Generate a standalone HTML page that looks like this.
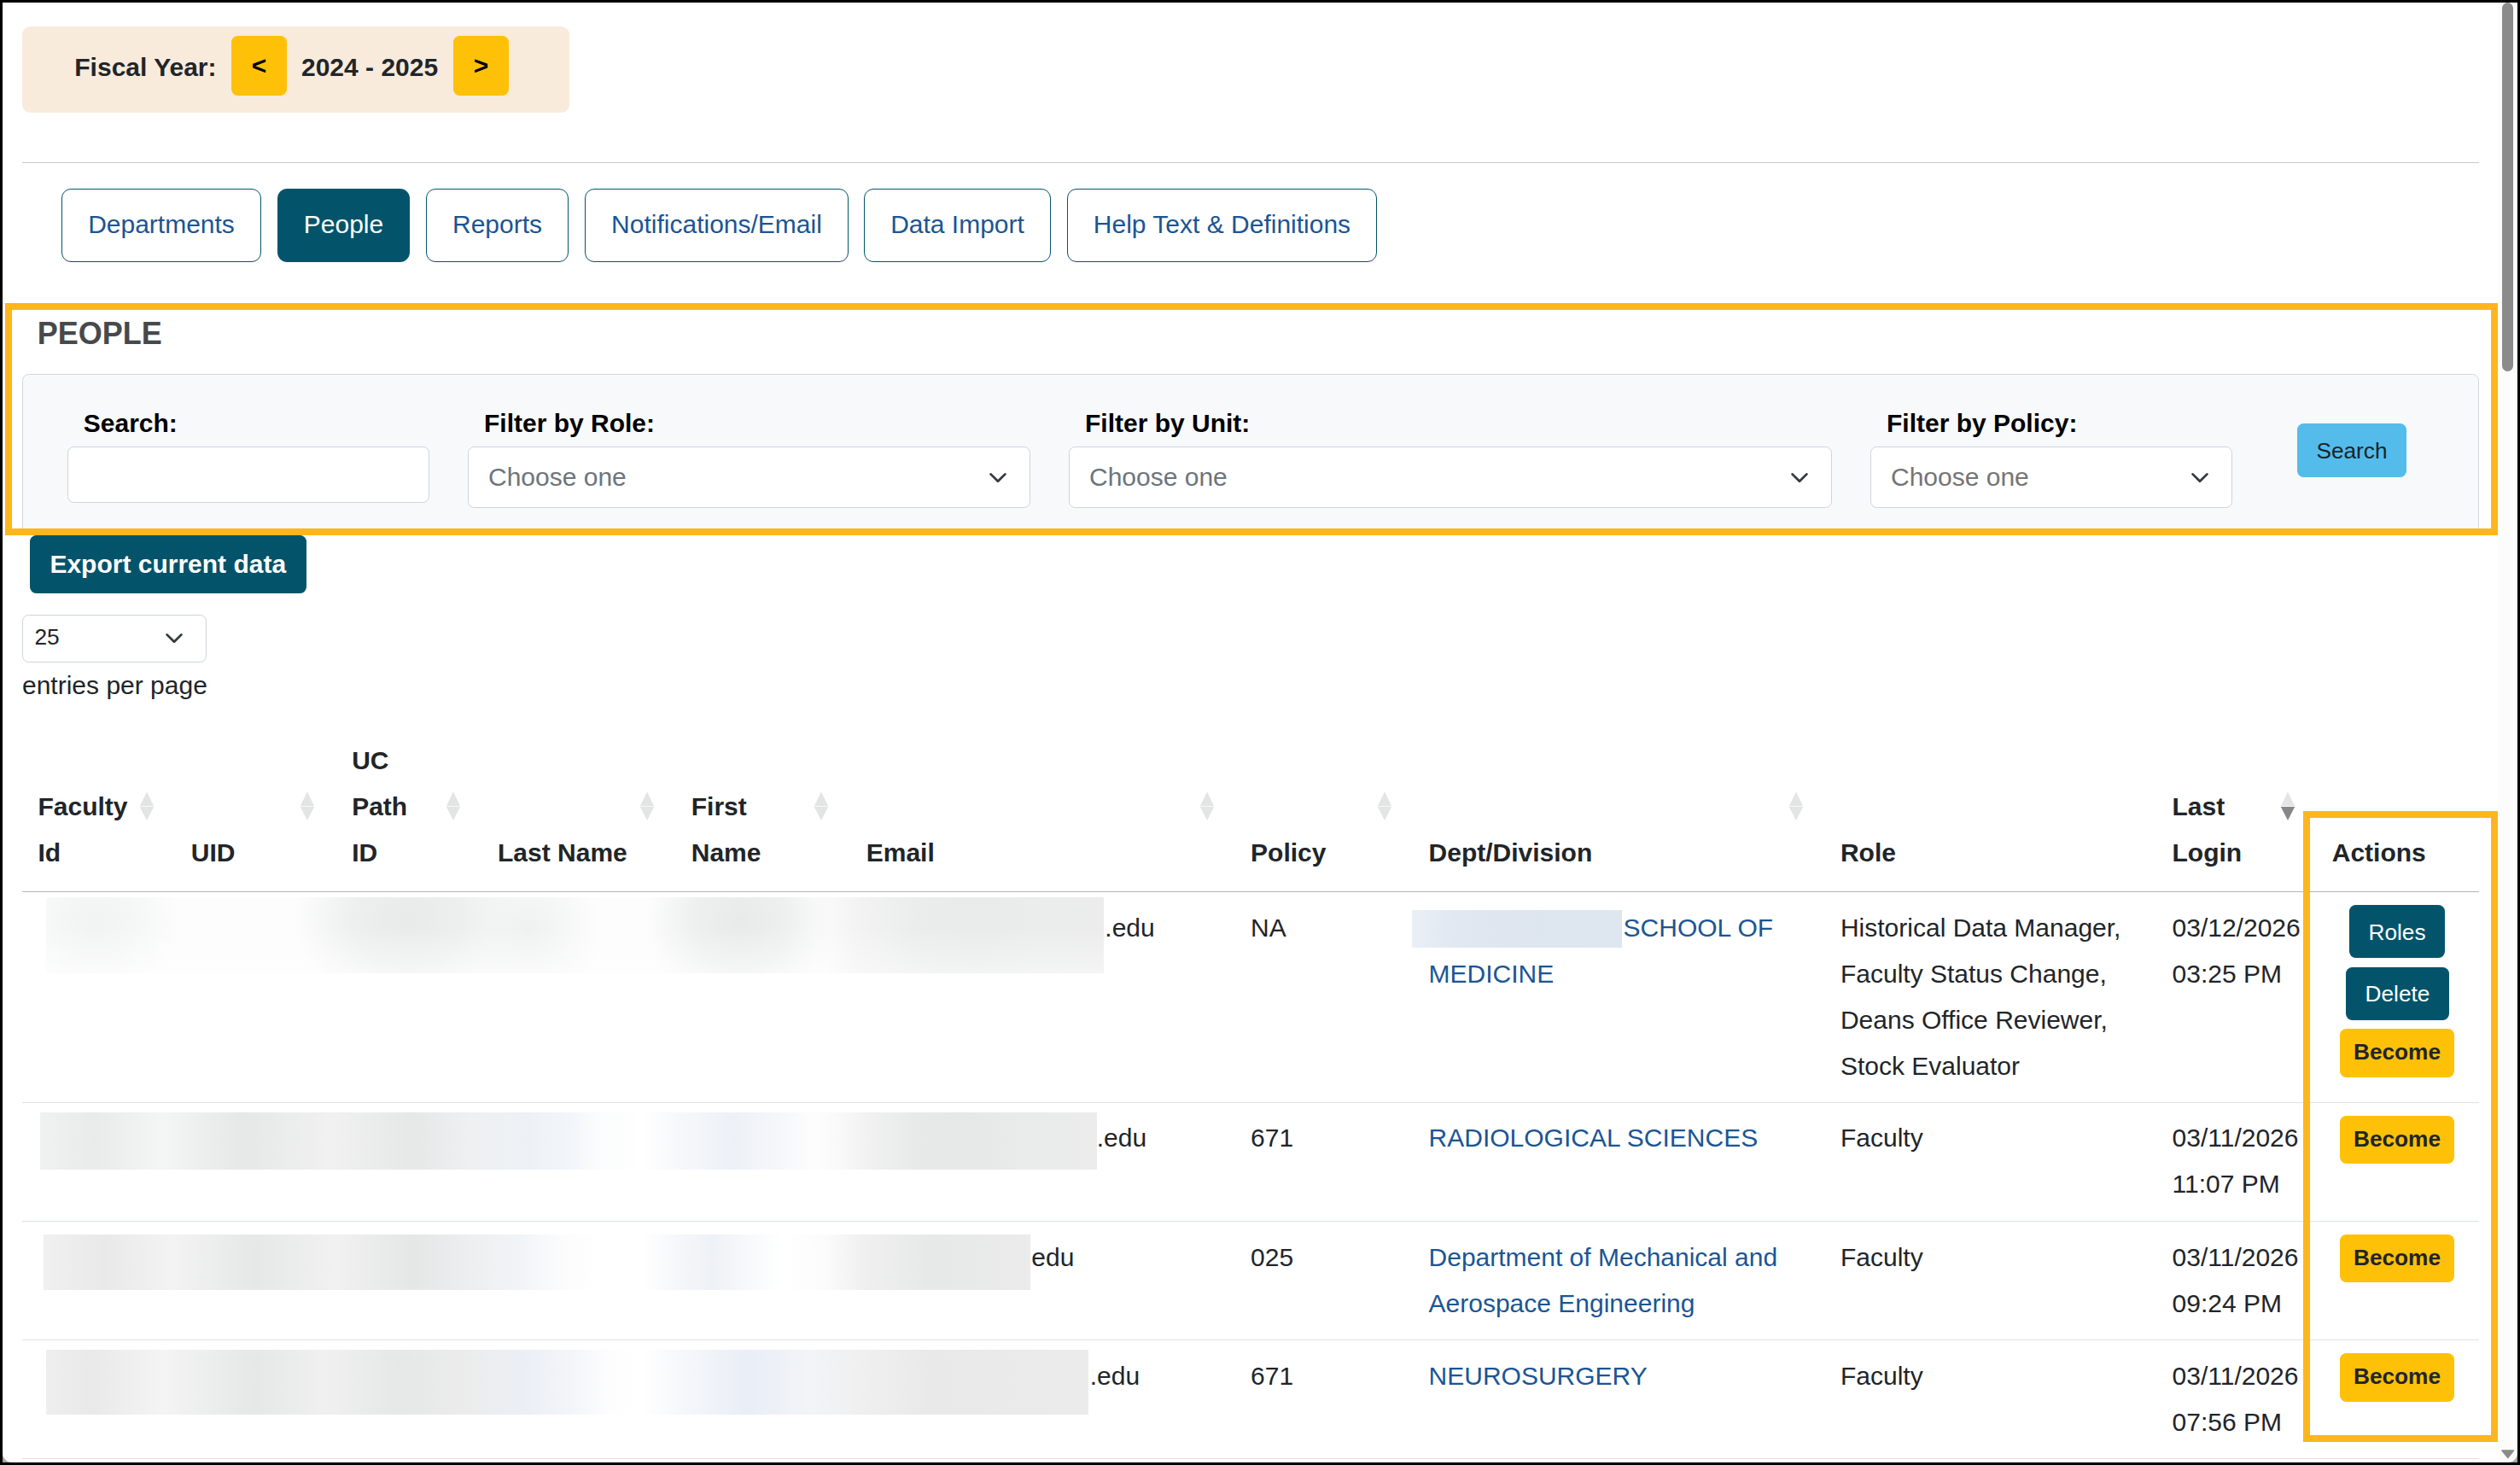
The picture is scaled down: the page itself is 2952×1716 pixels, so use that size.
<!DOCTYPE html>
<html lang="en"><head><meta charset="utf-8"><title>People</title>
<style>
*{box-sizing:border-box;margin:0;padding:0}
html,body{width:2952px;height:1716px;overflow:hidden;background:#fff}
body{font-family:"Liberation Sans",Arial,sans-serif;font-size:30px;line-height:45px;color:#212529;position:relative}
.abs{position:absolute}
.t{position:absolute;white-space:nowrap}
.b{font-weight:700}
.frame{position:absolute;left:0;top:0;width:2952px;height:1716px;border:3px solid #000;z-index:50;pointer-events:none}
.fy{left:26px;top:31px;width:641px;height:101px;background:#f8ebdb;border-radius:9.5px}
.ybtn{background:#ffc107;border-radius:7.5px;color:#000;font-weight:700;text-align:center}
.hr{left:26px;top:190px;width:2878px;height:1px;background:#c8cacc}
.tab{position:absolute;top:221px;height:86px;border:1px solid #03546b;border-radius:11px;color:#1b5595;text-align:center;line-height:82px;font-size:30px;background:#fff}
.tab.on{background:#03546b;color:#fff}
.hl{position:absolute;border:8px solid #feb61c;z-index:20}
.card{left:26px;top:438px;width:2878px;height:188px;background:#f8f9fa;border:1px solid #d3d6d9;border-radius:7.5px}
.lbl{position:absolute;top:473px;font-weight:700;color:#000;font-size:30px;line-height:45px;white-space:nowrap}
.inp{position:absolute;background:#fff;border:1px solid #ced4da;border-radius:7.5px}
.sel{position:absolute;background:#fff;border:1px solid #ced4da;border-radius:7.5px;color:#6c757d;font-size:30px;line-height:69px;padding-left:23px;white-space:nowrap}
.chev{position:absolute}
.sbtn{left:2691px;top:496px;width:128px;height:63px;background:#54bceb;border-radius:7.5px;color:#17242b;font-size:26.25px;line-height:64.5px;text-align:center}
.exp{left:35px;top:627px;width:324px;height:68px;background:#03546b;border-radius:7.5px;color:#fff;font-weight:700;line-height:67px;text-align:center;padding-right:0.5px}
.th{position:absolute;font-weight:700;line-height:54px;white-space:nowrap;color:#212529}
.td{position:absolute;line-height:54px;white-space:nowrap;color:#212529}
.td a{color:#1b5595;text-decoration:none}
.line{position:absolute;left:26px;width:2878px;height:1px}
.btn{position:absolute;border-radius:7.5px;font-size:26.25px;text-align:center;white-space:nowrap}
.btn.d{background:#03546b;color:#fff}
.btn.w{background:#ffc107;color:#212529;font-weight:700}
.blur{position:absolute}
</style></head>
<body>
<div class="abs fy"></div>
<div class="t b" style="left:87.3px;top:56px;">Fiscal Year:</div>
<div class="abs ybtn" style="left:271px;top:42px;width:65px;height:70px;line-height:70px">&lt;</div>
<div class="t b" style="left:353px;top:56px;">2024 - 2025</div>
<div class="abs ybtn" style="left:531px;top:42px;width:65px;height:70px;line-height:70px">&gt;</div>
<div class="abs hr"></div>
<div class="tab" style="left:72px;width:234px">Departments</div>
<div class="tab on" style="left:325px;width:155px">People</div>
<div class="tab" style="left:499px;width:167px">Reports</div>
<div class="tab" style="left:685px;width:309px">Notifications/Email</div>
<div class="tab" style="left:1012px;width:219px">Data Import</div>
<div class="tab" style="left:1250px;width:363px">Help Text &amp; Definitions</div>
<div class="t b" style="left:43.8px;top:364px;font-size:36px;line-height:54px;color:#48494b">PEOPLE</div>
<div class="abs card"></div>
<div class="hl" style="left:6px;top:355px;width:2920px;height:272px"></div>
<div class="lbl" style="left:97.8px">Search:</div>
<div class="inp" style="left:79px;top:523px;width:424px;height:66px"></div>
<div class="lbl" style="left:567px">Filter by Role:</div>
<div class="sel" style="left:548px;top:523px;width:659px;height:72px">Choose one<svg class="chev" style="right:22px;top:25px" width="30" height="22.5" viewBox="0 0 16 12"><path d="M3.5 3.4 8 7.9l4.5-4.5" fill="none" stroke="#343a40" stroke-width="1.5" stroke-linecap="round" stroke-linejoin="round"/></svg></div>
<div class="lbl" style="left:1271px">Filter by Unit:</div>
<div class="sel" style="left:1252px;top:523px;width:894px;height:72px">Choose one<svg class="chev" style="right:22px;top:25px" width="30" height="22.5" viewBox="0 0 16 12"><path d="M3.5 3.4 8 7.9l4.5-4.5" fill="none" stroke="#343a40" stroke-width="1.5" stroke-linecap="round" stroke-linejoin="round"/></svg></div>
<div class="lbl" style="left:2210px">Filter by Policy:</div>
<div class="sel" style="left:2191px;top:523px;width:424px;height:72px;color:#757575">Choose one<svg class="chev" style="right:22px;top:25px" width="30" height="22.5" viewBox="0 0 16 12"><path d="M3.5 3.4 8 7.9l4.5-4.5" fill="none" stroke="#343a40" stroke-width="1.5" stroke-linecap="round" stroke-linejoin="round"/></svg></div>
<div class="abs sbtn">Search</div>
<div class="abs exp">Export current data</div>
<div class="sel" style="left:26px;top:720px;width:216px;height:56px;font-size:26.25px;line-height:51px;padding-left:13.5px;color:#212529">25<svg class="chev" style="right:22px;top:16px" width="30" height="22.5" viewBox="0 0 16 12"><path d="M3.5 3.4 8 7.9l4.5-4.5" fill="none" stroke="#343a40" stroke-width="1.5" stroke-linecap="round" stroke-linejoin="round"/></svg></div>
<div class="t" style="left:26px;top:780px;">entries per page</div>
<div class="th" style="left:44.45px;top:917.50px">Faculty</div>
<div class="th" style="left:44.45px;top:971.50px">Id</div>
<div class="th" style="left:223.75px;top:971.50px">UID</div>
<div class="th" style="left:412.15px;top:863.50px">UC</div>
<div class="th" style="left:412.15px;top:917.50px">Path</div>
<div class="th" style="left:412.15px;top:971.50px">ID</div>
<div class="th" style="left:583.05px;top:971.50px">Last Name</div>
<div class="th" style="left:809.75px;top:917.50px">First</div>
<div class="th" style="left:809.75px;top:971.50px">Name</div>
<div class="th" style="left:1014.75px;top:971.50px">Email</div>
<div class="th" style="left:1465.05px;top:971.50px">Policy</div>
<div class="th" style="left:1673.55px;top:971.50px">Dept/Division</div>
<div class="th" style="left:2155.95px;top:971.50px">Role</div>
<div class="th" style="left:2544.55px;top:917.50px">Last</div>
<div class="th" style="left:2544.55px;top:971.50px">Login</div>
<div class="th" style="left:2731.75px;top:971.50px">Actions</div>
<svg class="abs" style="left:162.20px;top:925px" width="20" height="40" viewBox="0 0 20 40"><polygon points="10,2.6 18.2,19.3 1.8000000000000007,19.3" fill="#212529" fill-opacity="0.125"/><polygon points="1.8000000000000007,20.1 18.2,20.1 10,36" fill="#212529" fill-opacity="0.125"/></svg>
<svg class="abs" style="left:350.10px;top:925px" width="20" height="40" viewBox="0 0 20 40"><polygon points="10,2.6 18.2,19.3 1.8000000000000007,19.3" fill="#212529" fill-opacity="0.125"/><polygon points="1.8000000000000007,20.1 18.2,20.1 10,36" fill="#212529" fill-opacity="0.125"/></svg>
<svg class="abs" style="left:521.10px;top:925px" width="20" height="40" viewBox="0 0 20 40"><polygon points="10,2.6 18.2,19.3 1.8000000000000007,19.3" fill="#212529" fill-opacity="0.125"/><polygon points="1.8000000000000007,20.1 18.2,20.1 10,36" fill="#212529" fill-opacity="0.125"/></svg>
<svg class="abs" style="left:748.10px;top:925px" width="20" height="40" viewBox="0 0 20 40"><polygon points="10,2.6 18.2,19.3 1.8000000000000007,19.3" fill="#212529" fill-opacity="0.125"/><polygon points="1.8000000000000007,20.1 18.2,20.1 10,36" fill="#212529" fill-opacity="0.125"/></svg>
<svg class="abs" style="left:952.20px;top:925px" width="20" height="40" viewBox="0 0 20 40"><polygon points="10,2.6 18.2,19.3 1.8000000000000007,19.3" fill="#212529" fill-opacity="0.125"/><polygon points="1.8000000000000007,20.1 18.2,20.1 10,36" fill="#212529" fill-opacity="0.125"/></svg>
<svg class="abs" style="left:1403.50px;top:925px" width="20" height="40" viewBox="0 0 20 40"><polygon points="10,2.6 18.2,19.3 1.8000000000000007,19.3" fill="#212529" fill-opacity="0.125"/><polygon points="1.8000000000000007,20.1 18.2,20.1 10,36" fill="#212529" fill-opacity="0.125"/></svg>
<svg class="abs" style="left:1611.50px;top:925px" width="20" height="40" viewBox="0 0 20 40"><polygon points="10,2.6 18.2,19.3 1.8000000000000007,19.3" fill="#212529" fill-opacity="0.125"/><polygon points="1.8000000000000007,20.1 18.2,20.1 10,36" fill="#212529" fill-opacity="0.125"/></svg>
<svg class="abs" style="left:2093.80px;top:925px" width="20" height="40" viewBox="0 0 20 40"><polygon points="10,2.6 18.2,19.3 1.8000000000000007,19.3" fill="#212529" fill-opacity="0.125"/><polygon points="1.8000000000000007,20.1 18.2,20.1 10,36" fill="#212529" fill-opacity="0.125"/></svg>
<svg class="abs" style="left:2670.00px;top:925px" width="20" height="40" viewBox="0 0 20 40"><polygon points="10,2.6 18.2,19.3 1.8000000000000007,19.3" fill="#212529" fill-opacity="0.125"/><polygon points="1.8000000000000007,20.1 18.2,20.1 10,36" fill="#212529" fill-opacity="0.55"/></svg>
<div class="line" style="top:1044px;background:#b3b3b3"></div>
<div class="line" style="top:1291px;background:#dee2e6"></div>
<div class="line" style="top:1430px;background:#dee2e6"></div>
<div class="line" style="top:1569px;background:#dee2e6"></div>
<div class="line" style="top:1708px;background:#dee2e6"></div>
<div class="td" style="left:1465.05px;top:1059.50px;">NA</div>
<div class="td" style="left:1673.55px;top:1059.50px;"><a><span style="display:inline-block;width:228px"></span>SCHOOL OF<br>MEDICINE</a></div>
<div class="td" style="left:2155.95px;top:1059.50px;">Historical Data Manager,<br>Faculty Status Change,<br>Deans Office Reviewer,<br>Stock Evaluator</div>
<div class="td" style="left:2544.55px;top:1059.50px;">03/12/2026<br>03:25 PM</div>
<div class="td" style="left:1465.05px;top:1306.30px;">671</div>
<div class="td" style="left:1673.55px;top:1306.30px;"><a>RADIOLOGICAL SCIENCES</a></div>
<div class="td" style="left:2155.95px;top:1306.30px;">Faculty</div>
<div class="td" style="left:2544.55px;top:1306.30px;">03/11/2026<br>11:07 PM</div>
<div class="td" style="left:1465.05px;top:1446.00px;">025</div>
<div class="td" style="left:1673.55px;top:1446.00px;"><a>Department of Mechanical and<br>Aerospace Engineering</a></div>
<div class="td" style="left:2155.95px;top:1446.00px;">Faculty</div>
<div class="td" style="left:2544.55px;top:1446.00px;">03/11/2026<br>09:24 PM</div>
<div class="td" style="left:1465.05px;top:1585.30px;">671</div>
<div class="td" style="left:1673.55px;top:1585.30px;"><a>NEUROSURGERY</a></div>
<div class="td" style="left:2155.95px;top:1585.30px;">Faculty</div>
<div class="td" style="left:2544.55px;top:1585.30px;">03/11/2026<br>07:56 PM</div>
<div class="td" style="left:1294.3px;top:1059.50px">.edu</div>
<div class="td" style="left:1284.7px;top:1306.30px">.edu</div>
<div class="td" style="left:1208.3px;top:1446.00px">edu</div>
<div class="td" style="left:1276.7px;top:1585.30px">.edu</div>
<div class="blur" style="left:54px;top:1051px;width:1239px;height:89px;background:linear-gradient(180deg,rgba(255,255,255,0) 40%,rgba(255,255,255,.45) 100%),radial-gradient(ellipse 100px 90px at 58px 30px,#f1f2f2 0,#f5f6f6 45%,rgba(251,251,251,0) 100%),radial-gradient(ellipse 135px 115px at 425px 25px,#e8e9e9 0,#eeefef 50%,rgba(255,255,255,0) 100%),radial-gradient(ellipse 85px 100px at 565px 40px,#eff0f0 0,rgba(255,255,255,0) 100%),radial-gradient(ellipse 110px 115px at 813px 28px,#e8e9e9 0,#eeefef 50%,rgba(255,255,255,0) 100%),linear-gradient(90deg,rgba(255,255,255,0) 900px,#f3f3f3 950px,#ebecec 1020px,#e9eaea 1090px,#ebecec 1160px,#ececec 1239px),#fdfdfd"></div>
<div class="blur" style="left:47px;top:1303px;width:1238px;height:67px;background:linear-gradient(90deg,#f0f1f1 0.00%,#e9eaea 5.09%,#f4f5f5 11.55%,#e6e7e7 19.06%,#f1f1f1 27.63%,#e6e7e7 35.14%,#eef0f1 40.55%,#edf1f6 45.88%,#f2f5f9 50.16%,#fbfcfd 52.75%,#ffffff 57.03%,#f6f8fb 60.26%,#edf1f7 65.59%,#f5f7fa 69.95%,#fdfdfd 73.18%,#fafafa 75.28%,#f1f1f1 78.51%,#e8e9e9 82.79%,#e6e7e7 87.08%,#e9eaea 92.49%,#ececec 100.00%)"></div>
<div class="blur" style="left:51px;top:1446px;width:1156px;height:65px;background:linear-gradient(90deg,#f0f0f0 0.00%,#e9e9e9 6.23%,#f3f3f3 12.89%,#e6e7e7 21.37%,#f1f1f1 29.41%,#e5e6e6 37.46%,#eeeff0 43.69%,#f1f4f7 48.18%,#fcfcfd 52.68%,#ffffff 56.23%,#ffffff 60.64%,#f5f7fa 64.27%,#eef1f6 67.82%,#f7f9fb 71.37%,#ffffff 74.91%,#fbfbfb 79.41%,#f0f0f0 82.96%,#e7e8e8 89.71%,#ebebeb 100.00%)"></div>
<div class="blur" style="left:54px;top:1581px;width:1221px;height:76px;background:linear-gradient(90deg,#eeeeee 0.00%,#e9e9e9 4.34%,#f4f4f4 11.14%,#e6e7e7 19.98%,#f0f0f0 26.78%,#e6e7e7 33.99%,#ececec 40.29%,#ebeff5 45.78%,#f3f5f9 50.45%,#fdfdfe 53.81%,#ffffff 57.17%,#f6f8fb 60.61%,#e9eef6 67.32%,#f2f4f7 73.22%,#f0f0f0 77.48%,#e9e9e9 84.68%,#ebebeb 100.00%)"></div>
<div class="blur" style="left:1654px;top:1066px;width:246px;height:44px;background:linear-gradient(90deg,#ebf0f6 0.00%,#e1e8f1 18.70%,#dde5ee 59.35%,#dee6ef 100.00%)"></div>
<div class="btn d" style="left:2752px;top:1060px;width:112px;height:62px;line-height:64px">Roles</div>
<div class="btn d" style="left:2748px;top:1133px;width:121px;height:62px;line-height:62px">Delete</div>
<div class="btn w" style="left:2741px;top:1205.3px;width:134px;height:56.4px;line-height:55.5px">Become</div>
<div class="btn w" style="left:2741px;top:1307px;width:134px;height:56.4px;line-height:55.5px">Become</div>
<div class="btn w" style="left:2741px;top:1445.8px;width:134px;height:56.4px;line-height:55.5px">Become</div>
<div class="btn w" style="left:2741px;top:1585.2px;width:134px;height:56.4px;line-height:55.5px">Become</div>
<div class="hl" style="left:2698px;top:950px;width:228px;height:739px"></div>
<div class="abs" style="left:2926px;top:3px;width:23px;height:1710px;background:#fcfcfc;z-index:30"></div>
<div class="abs" style="left:2931px;top:3px;width:13px;height:432px;background:#8b8b8b;border-radius:6.5px;z-index:31"></div>
<svg class="abs" style="left:2928px;top:1694px;z-index:31" width="20" height="18" viewBox="0 0 20 18"><path d="M3 4.2h13.4a.9.9 0 0 1 .75 1.4l-6.6 8.2a.9.9 0 0 1-1.5 0L2.3 5.6A.9.9 0 0 1 3 4.2z" fill="#8b8b8b"/></svg>
<div class="frame"></div>
<svg class="abs" style="left:0;top:1696px;z-index:60" width="20" height="20" viewBox="0 0 20 20"><path d="M3 6v11h11a11 11 0 0 1-11-11z" fill="#8a8a8a" fill-opacity=".75"/></svg>
<svg class="abs" style="left:2932px;top:1696px;z-index:60" width="20" height="20" viewBox="0 0 20 20"><path d="M17 6v11H6a11 11 0 0 0 11-11z" fill="#8a8a8a" fill-opacity=".75"/></svg>
</body></html>
